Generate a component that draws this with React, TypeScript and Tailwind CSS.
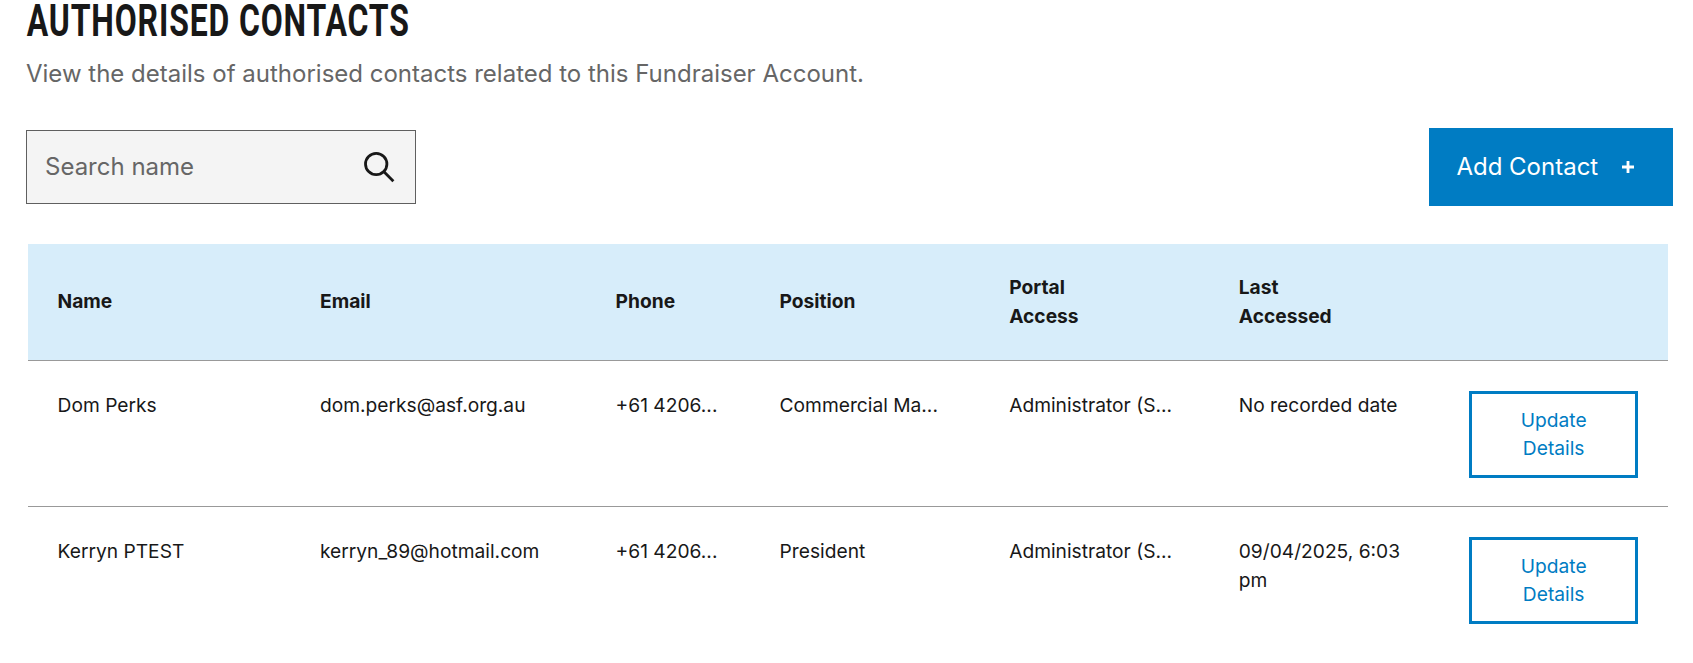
import React from "react";

type Contact = {
  name: string;
  email: string;
  phone: string;
  position: string;
  access: string;
  lastAccessed: string;
};

const contacts: Contact[] = [
  {
    name: "Dom Perks",
    email: "dom.perks@asf.org.au",
    phone: "+61 4206...",
    position: "Commercial Ma...",
    access: "Administrator (S...",
    lastAccessed: "No recorded date",
  },
  {
    name: "Kerryn PTEST",
    email: "kerryn_89@hotmail.com",
    phone: "+61 4206...",
    position: "President",
    access: "Administrator (S...",
    lastAccessed: "09/04/2025, 6:03 pm",
  },
];

const cell = "px-[30px] pt-[30px] pb-[28px] align-top";
const head = "px-[30px] pt-[29px] pb-[29.4px] text-left align-middle font-bold";

export default function App() {
  return (
    <main className="h-[663px] bg-white pl-[26px] font-['Inter',sans-serif] text-[#181818]">
      <h1 className="h-[48px] w-max origin-left scale-x-[0.71] whitespace-nowrap pl-px font-['Roboto',sans-serif] text-[45px] font-bold leading-[42px] tracking-[1.2px]">
        AUTHORISED CONTACTS
      </h1>
      <p className="mt-[8px] h-[36px] text-[24px] leading-[36px] text-[#666]">
        View the details of authorised contacts related to this Fundraiser Account.
      </p>

      <div className="mt-[36px] flex h-[78px] w-[1647px] items-center justify-between">
        <label className="flex h-[74px] w-[390px] items-center justify-between border border-[#5f5f5f] bg-[#f4f4f4] pl-[18px] pr-[20px]">
          <input
            type="text"
            placeholder="Search name"
            className="w-[280px] bg-transparent text-[24px] leading-[36px] outline-none placeholder:text-[#666]"
          />
          <svg className="size-[32px]" viewBox="0 0 32 32" fill="none" stroke="#181818" strokeWidth="2.8">
            <circle cx="13.2" cy="13" r="10.7" />
            <path d="M20.7 20.5 30.4 30.2" />
          </svg>
        </label>
        <button className="flex h-[78px] w-[244px] items-center bg-[#007cc3] pl-[27.4px] text-[24px] text-white">
          <span className="whitespace-nowrap">Add Contact</span>
          <svg className="ml-[23.6px] size-[12px]" viewBox="0 0 12 12" stroke="white" strokeWidth="2.8">
            <path d="M6 0v12M0 6h12" />
          </svg>
        </button>
      </div>

      <table className="mt-[38px] ml-[1.6px] w-[1640.4px] table-fixed border-collapse text-[19.2px] leading-[28.8px]">
        <colgroup>
          <col className="w-[262.4px]" />
          <col className="w-[295.6px]" />
          <col className="w-[164px]" />
          <col className="w-[229.6px]" />
          <col className="w-[229.6px]" />
          <col className="w-[229.6px]" />
          <col className="w-[229.6px]" />
        </colgroup>
        <thead>
          <tr className="border-b border-[#999] bg-[#d7edfa]">
            <th className={head}>Name</th>
            <th className={head}>Email</th>
            <th className={head}>Phone</th>
            <th className={head}>Position</th>
            <th className={head}>Portal<br />Access</th>
            <th className={head}>Last<br />Accessed</th>
            <th className={head}></th>
          </tr>
        </thead>
        <tbody>
          {contacts.map((c) => (
            <tr key={c.name} className="border-b border-[#999] last:border-b-0">
              <td className={cell}>{c.name}</td>
              <td className={cell}>{c.email}</td>
              <td className={`${cell} whitespace-nowrap`}>{c.phone}</td>
              <td className={`${cell} whitespace-nowrap`}>{c.position}</td>
              <td className={`${cell} whitespace-nowrap`}>{c.access}</td>
              <td className={cell}>{c.lastAccessed}</td>
              <td className="pl-[31px] pr-[30px] pt-[30px] pb-[28px] align-top">
                <button className="block w-full border-3 border-[#007cc3] px-[40px] py-[11.8px] text-center leading-[28.7px] text-[#007cc3]">
                  Update Details
                </button>
              </td>
            </tr>
          ))}
        </tbody>
      </table>
    </main>
  );
}
